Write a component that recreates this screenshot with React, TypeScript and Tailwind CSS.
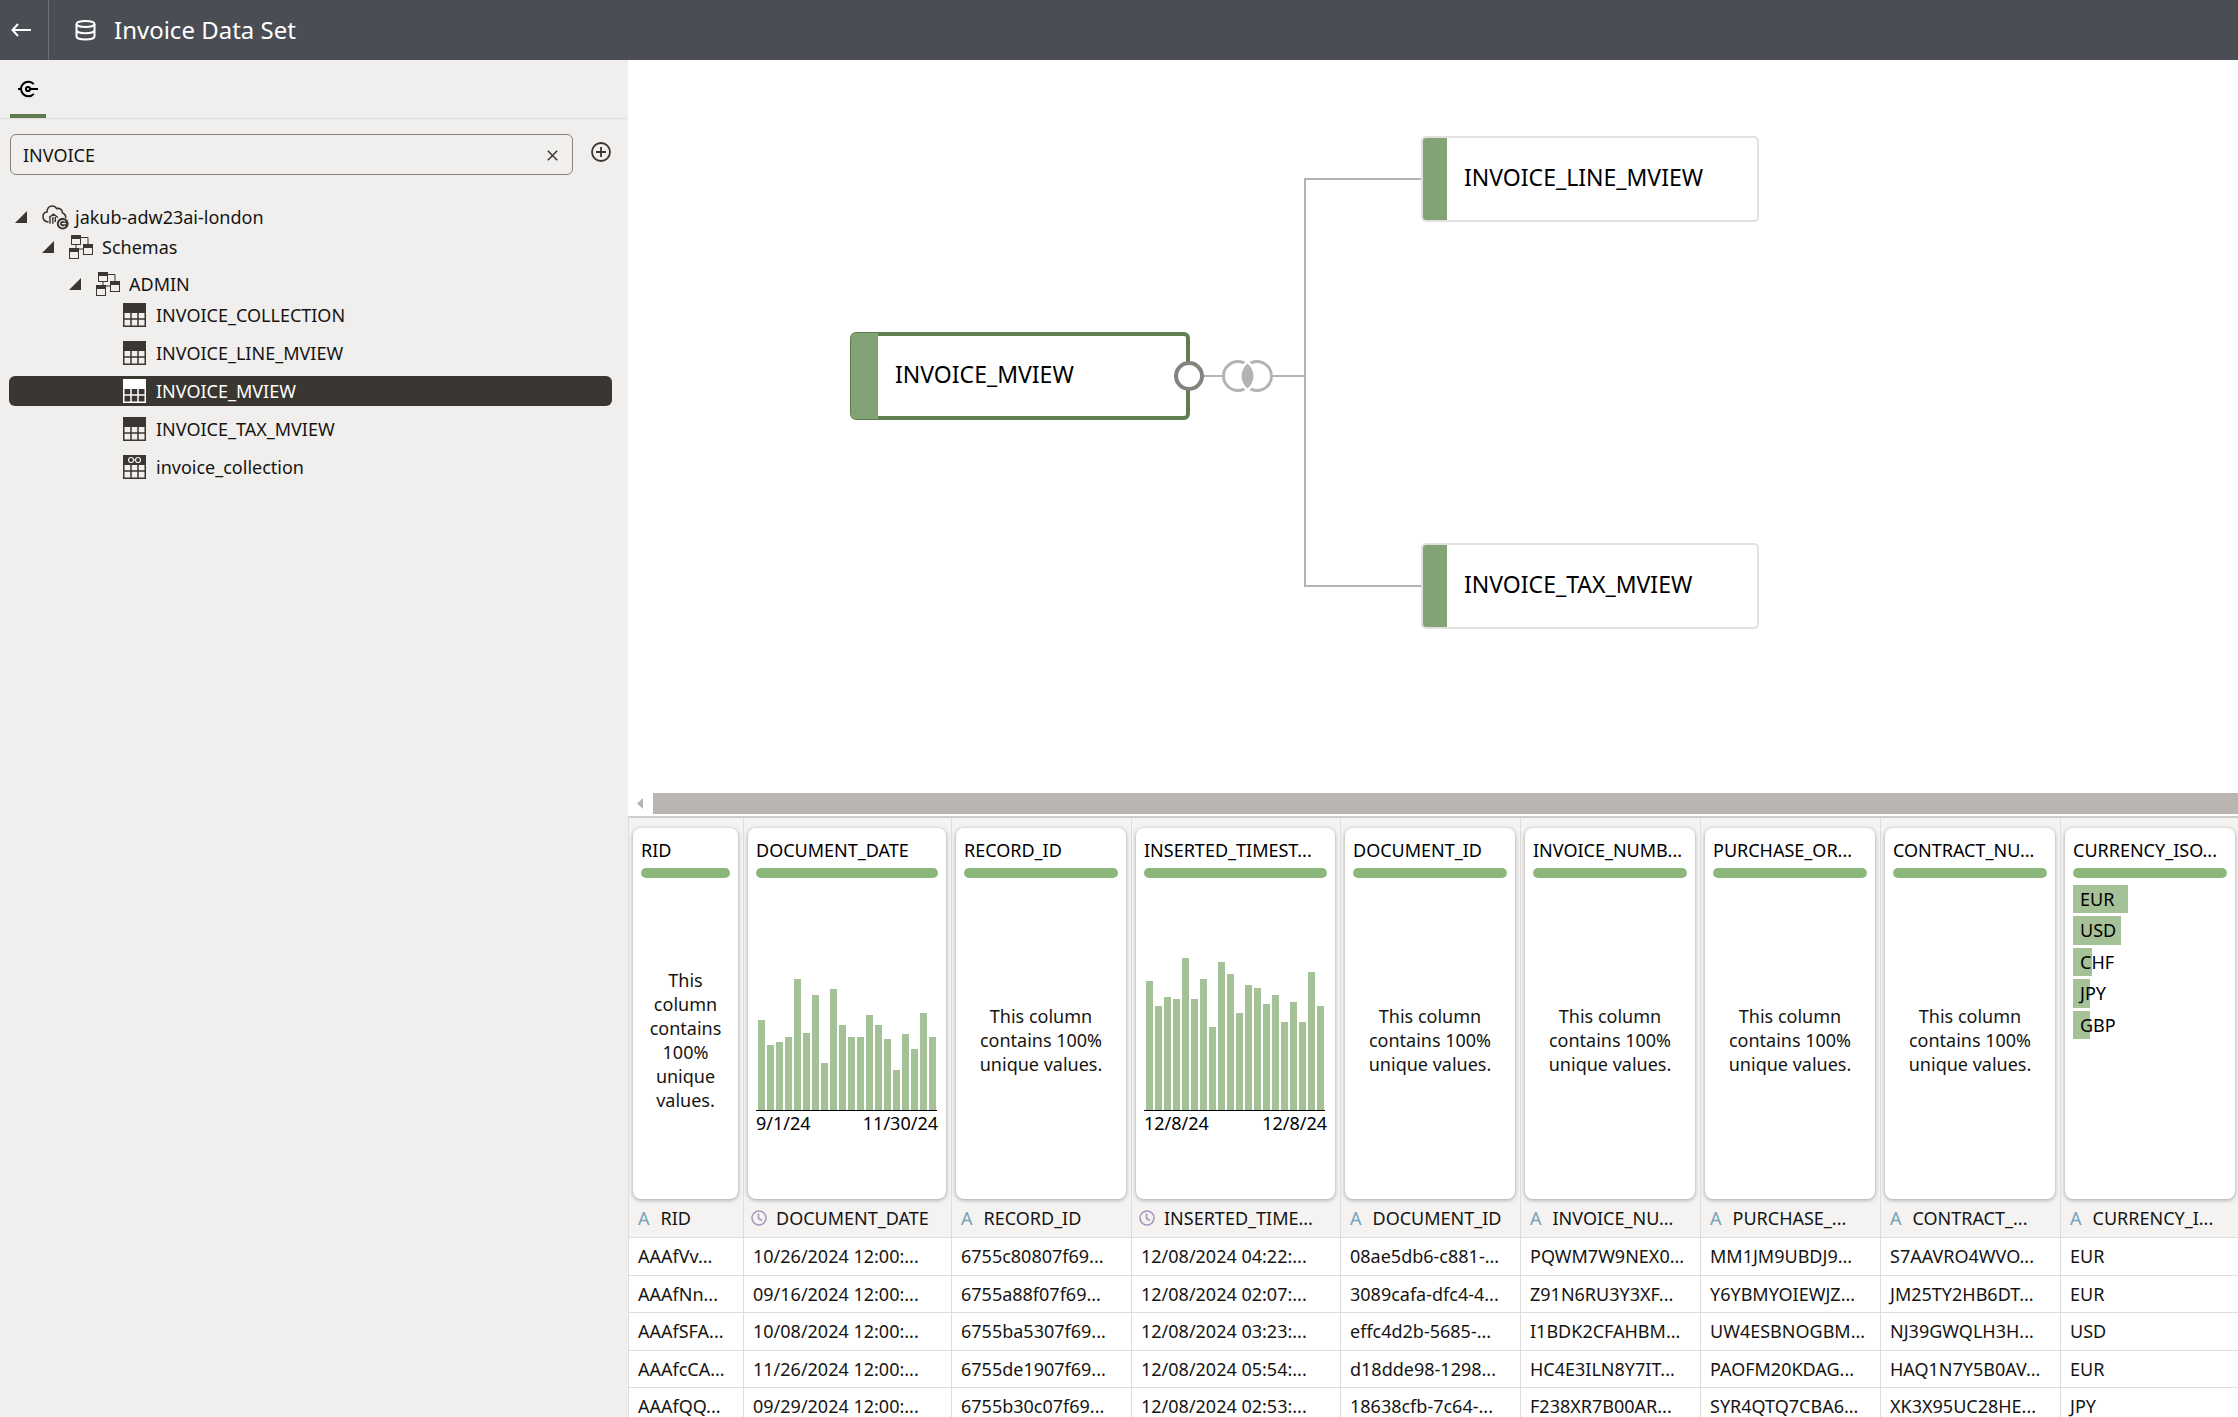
import type { ReactNode } from "react";

type Kind = "text" | "date";
type Column = {
  width: string;
  title: string;
  label: string;
  kind: Kind;
  bars?: number[];
  from?: string;
  to?: string;
  top?: [string, number][];
};

const columns: Column[] = [
  { width: "w-[115px]", title: "RID", label: "RID", kind: "text" },
  {
    width: "w-[208px]",
    title: "DOCUMENT_DATE",
    label: "DOCUMENT_DATE",
    kind: "date",
    bars: [90, 65, 68, 73, 131, 77, 115, 47, 121, 85, 73, 73, 95, 85, 71, 40, 76, 61, 97, 73],
    from: "9/1/24",
    to: "11/30/24",
  },
  { width: "w-[180px]", title: "RECORD_ID", label: "RECORD_ID", kind: "text" },
  {
    width: "w-[209px]",
    title: "INSERTED_TIMEST...",
    label: "INSERTED_TIME...",
    kind: "date",
    bars: [129, 104, 113, 111, 152, 111, 131, 83, 148, 136, 97, 125, 122, 106, 115, 88, 108, 88, 138, 104],
    from: "12/8/24",
    to: "12/8/24",
  },
  { width: "w-[180px]", title: "DOCUMENT_ID", label: "DOCUMENT_ID", kind: "text" },
  { width: "w-[180px]", title: "INVOICE_NUMB...", label: "INVOICE_NU...", kind: "text" },
  { width: "w-[180px]", title: "PURCHASE_OR...", label: "PURCHASE_...", kind: "text" },
  { width: "w-[180px]", title: "CONTRACT_NU...", label: "CONTRACT_...", kind: "text" },
  {
    width: "w-[180px]",
    title: "CURRENCY_ISO...",
    label: "CURRENCY_I...",
    kind: "text",
    top: [
      ["EUR", 55],
      ["USD", 48],
      ["CHF", 19],
      ["JPY", 17],
      ["GBP", 17],
    ],
  },
];

const rows: string[][] = [
  ["AAAfVv...", "10/26/2024 12:00:...", "6755c80807f69...", "12/08/2024 04:22:...", "08ae5db6-c881-...", "PQWM7W9NEX0...", "MM1JM9UBDJ9...", "S7AAVRO4WVO...", "EUR"],
  ["AAAfNn...", "09/16/2024 12:00:...", "6755a88f07f69...", "12/08/2024 02:07:...", "3089cafa-dfc4-4...", "Z91N6RU3Y3XF...", "Y6YBMYOIEWJZ...", "JM25TY2HB6DT...", "EUR"],
  ["AAAfSFA...", "10/08/2024 12:00:...", "6755ba5307f69...", "12/08/2024 03:23:...", "effc4d2b-5685-...", "I1BDK2CFAHBM...", "UW4ESBNOGBM...", "NJ39GWQLH3H...", "USD"],
  ["AAAfcCA...", "11/26/2024 12:00:...", "6755de1907f69...", "12/08/2024 05:54:...", "d18dde98-1298...", "HC4E3ILN8Y7IT...", "PAOFM20KDAG...", "HAQ1N7Y5B0AV...", "EUR"],
  ["AAAfQQ...", "09/29/2024 12:00:...", "6755b30c07f69...", "12/08/2024 02:53:...", "18638cfb-7c64-...", "F238XR7B00AR...", "SYR4QTQ7CBA6...", "XK3X95UC28HE...", "JPY"],
];

function BackIcon() {
  return (
    <svg width="20" height="14" viewBox="0 0 20 14" fill="none" stroke="currentColor" strokeWidth="2">
      <path d="M20 7H2M7 1 1.5 7 7 13" />
    </svg>
  );
}

function DatabaseIcon() {
  return (
    <svg width="21" height="21" viewBox="0 0 21 21" fill="none" stroke="currentColor" strokeWidth="2">
      <ellipse cx="10.5" cy="4" rx="9" ry="3" />
      <path d="M1.5 4v12.5c0 1.7 4 3 9 3s9-1.3 9-3V4M1.5 10.200c0 1.700 4 3 9 3s9-1.300 9-3" />
    </svg>
  );
}

function ConnectionIcon() {
  return (
    <svg width="20" height="18" viewBox="0 0 20 18" fill="none" stroke="currentColor" strokeWidth="2">
      <path d="M15.800 4.200A7.300 7.300 0 1 0 15.800 13.800M0 9h3M12.200 9H20" />
      <circle cx="10" cy="9" r="2.100" />
    </svg>
  );
}

function CloseIcon() {
  return (
    <svg width="11" height="11" viewBox="0 0 11 11" fill="none" stroke="currentColor" strokeWidth="1.500">
      <path d="M.8.8 10.200 10.200M10.200.8.8 10.200" />
    </svg>
  );
}

function AddIcon() {
  return (
    <svg width="20" height="20" viewBox="0 0 20 20" fill="none" stroke="currentColor" strokeWidth="1.800">
      <circle cx="10" cy="10" r="9" />
      <path d="M10 5v10M5 10h10" />
    </svg>
  );
}

function CloudIcon() {
  return (
    <svg width="27" height="25" viewBox="0 0 27 25" fill="none" stroke="currentColor">
      <path
        d="M6.500 17C3 16.500 1 14.500 1 11.700 1 9 2.800 7.200 5 7 4.800 3.500 7 1 10.200 1c2 0 3.600 1 4.500 2.600C18 2.800 20.500 4.800 20.500 8c2.300.9 3.500 2.600 3.200 5"
        strokeWidth="1.600"
      />
      <path d="M7 12.500 11.500 9.200 16 12.500M8 11.800v7M10.800 12v6.800M13.300 12v5" strokeWidth="1.400" />
      <circle cx="20.700" cy="18.700" r="5.900" fill="currentColor" stroke="none" />
      <path d="M23 16.600a3.200 3.200 0 1 0 0 4.200M19.800 18.700H24" stroke="#f0efed" strokeWidth="1.200" />
    </svg>
  );
}

function SchemaIcon() {
  return (
    <svg width="25" height="25" viewBox="0 0 25 25" fill="none" stroke="currentColor">
      <path d="M12 2.500h7V9M7 9v4M10 14h5" />
      <rect x="2.500" y=".5" width="9" height="9" />
      <rect x="14.500" y="9.500" width="9" height="10" />
      <rect x=".5" y="13.500" width="9" height="10" />
      <path d="M2 0h10v4H2zM14 9h10v4H14zM0 13h10v4H0z" fill="currentColor" stroke="none" />
    </svg>
  );
}

function TableIcon({ glasses = false }: { glasses?: boolean }) {
  return (
    <svg width="23" height="24" viewBox="0 0 23 24" fill="none" stroke="currentColor">
      <rect width="23" height="10" fill="currentColor" stroke="none" />
      <path d="M.75 9v14.200h21.500V9M.5 16h22M8 9v14M15 9v14" strokeWidth="1.500" />
      {glasses && (
        <g stroke="#f0efed" strokeWidth="1.200">
          <circle cx="8" cy="5" r="2.500" />
          <circle cx="15" cy="5" r="2.500" />
          <path d="M10.500 5h2" />
        </g>
      )}
    </svg>
  );
}

function ClockIcon() {
  return (
    <svg width="16" height="16" viewBox="0 0 16 16" fill="none" stroke="#ab97bd" strokeWidth="1.600" className="shrink-0">
      <circle cx="8" cy="8" r="7" />
      <path d="M7.500 3.500v5l3.500 2" />
    </svg>
  );
}

function Row({
  children,
  icon,
  branch = false,
  selected = false,
  indent,
}: {
  children: ReactNode;
  icon: ReactNode;
  branch?: boolean;
  selected?: boolean;
  indent: string;
}) {
  return (
    <button
      type="button"
      className={`flex h-[30px] w-full items-center rounded-md text-left ${indent} ${
        selected ? "bg-[#3a3631] text-white" : "text-[#161513]"
      }`}
    >
      {branch && (
        <svg width="12" height="12" viewBox="0 0 12 12" className="mr-[15px] text-[#3a3631]">
          <path d="M12 0v12H0z" fill="currentColor" />
        </svg>
      )}
      <span className={`mr-[7px] w-[26px] ${selected ? "text-white" : "text-[#3a3631]"}`}>{icon}</span>
      {children}
    </button>
  );
}

function Sidebar() {
  return (
    <aside className="flex w-[628px] shrink-0 flex-col bg-[#f0efed]">
      <div className="h-[59px] border-b border-[#dfdedc] pl-[10px]">
        <button type="button" aria-label="Connections" className="flex h-[58px] w-9 items-center justify-center border-b-4 border-[#5f7d4f] pt-1">
          <ConnectionIcon />
        </button>
      </div>
      <div className="flex items-start pt-[15px] pl-[10px]">
        <div className="flex h-[41px] w-[563px] items-center rounded-md border border-[#85827e] pt-0.5 pr-[14px] pl-3">
          <input
            aria-label="Search"
            defaultValue="INVOICE"
            className="min-w-0 flex-1 bg-transparent text-[#161513] outline-none"
          />
          <button type="button" aria-label="Clear" className="text-[#3a3631]">
            <CloseIcon />
          </button>
        </div>
        <button type="button" aria-label="Add" className="mt-2 ml-[18px] text-[#3a3631]">
          <AddIcon />
        </button>
      </div>
      <nav className="mt-[27px] mr-4 ml-[9px]">
        <ul>
          <li>
            <Row branch icon={<CloudIcon />} indent="pl-[6px]">
              jakub-adw23ai-london
            </Row>
            <ul>
              <li>
                <Row branch icon={<SchemaIcon />} indent="pl-[33px]">
                  Schemas
                </Row>
                <ul className="mt-[7px]">
                  <li>
                    <Row branch icon={<SchemaIcon />} indent="pl-[60px]">
                      ADMIN
                    </Row>
                    <ul className="mt-px flex flex-col gap-2">
                      <li>
                        <Row icon={<TableIcon />} indent="pl-[114px]">
                          INVOICE_COLLECTION
                        </Row>
                      </li>
                      <li>
                        <Row icon={<TableIcon />} indent="pl-[114px]">
                          INVOICE_LINE_MVIEW
                        </Row>
                      </li>
                      <li>
                        <Row selected icon={<TableIcon />} indent="pl-[114px]">
                          INVOICE_MVIEW
                        </Row>
                      </li>
                      <li>
                        <Row icon={<TableIcon />} indent="pl-[114px]">
                          INVOICE_TAX_MVIEW
                        </Row>
                      </li>
                      <li>
                        <Row icon={<TableIcon glasses />} indent="pl-[114px]">
                          invoice_collection
                        </Row>
                      </li>
                    </ul>
                  </li>
                </ul>
              </li>
            </ul>
          </li>
        </ul>
      </nav>
    </aside>
  );
}

function Node({ place, children }: { place: string; children: ReactNode }) {
  return (
    <div className={`absolute flex h-[86px] w-[338px] items-center overflow-hidden rounded-[5px] border-2 border-[#e3e1df] bg-white ${place}`}>
      <div className="-my-0.5 -ml-0.5 h-[86px] w-[26px] bg-[#82a373]" />
      <span className="pb-1 pl-[17px] text-[23px] text-black">{children}</span>
    </div>
  );
}

function Diagram() {
  return (
    <div className="relative min-h-0 flex-1 overflow-hidden bg-white">
      <svg width="800" height="600" viewBox="0 0 800 600" fill="none" stroke="#b3b3b3" strokeWidth="2" className="absolute top-0 left-0">
        <path d="M574 316h21M645 316h32M793 119H677V526H793" />
        <g strokeWidth="3">
          <circle cx="610" cy="316" r="14.500" />
          <circle cx="629" cy="316" r="14.500" />
        </g>
        <path
          d="M619.500 303.500c8 7 8 18 0 25c-8-7-8-18 0-25z"
          fill="#b3b3b3"
          stroke="#fff"
          strokeWidth="5"
        />
        <path d="M619.500 303.500c8 7 8 18 0 25c-8-7-8-18 0-25z" fill="#b3b3b3" stroke="none" />
      </svg>
      <div className="absolute top-[272px] left-[222px] flex h-[88px] w-[340px] items-center rounded-md border-4 border-[#5f7d4f] bg-white">
        <div className="-my-[3px] -ml-[3px] h-[86px] w-[27px] rounded-l bg-[#82a373]" />
        <span className="pb-1 pl-[17px] text-[23px] text-black">INVOICE_MVIEW</span>
      </div>
      <div className="absolute top-[301px] left-[546px] size-[30px] rounded-full border-4 border-[#85827e] bg-white" />
      <Node place="top-[76px] left-[793px]">INVOICE_LINE_MVIEW</Node>
      <Node place="top-[483px] left-[793px]">INVOICE_TAX_MVIEW</Node>
    </div>
  );
}

function Histogram({ bars, from, to }: { bars: number[]; from?: string; to?: string }) {
  return (
    <div>
      <div className="flex h-[233px] w-[181px] items-end gap-0.5 border-b border-black px-0.5">
        {bars.map((height, i) => (
          <div key={i} className="w-[7px] shrink-0 bg-[#a5c198]" style={{ height }} />
        ))}
      </div>
      <div className="flex justify-between leading-6">
        <span>{from}</span>
        <span>{to}</span>
      </div>
    </div>
  );
}

function TopValues({ values }: { values: [string, number][] }) {
  return (
    <ul className="mt-[7px] flex flex-col gap-[3px]">
      {values.map(([name, width]) => (
        <li key={name} className="relative flex items-center pl-[7px] odd:h-[28px] even:h-[29px]">
          <div className="absolute inset-y-0 left-0 bg-[#a5c198]" style={{ width }} />
          <span className="relative">{name}</span>
        </li>
      ))}
    </ul>
  );
}

function Card({ column }: { column: Column }) {
  return (
    <div className="mr-[5px] ml-1 flex h-[371px] flex-col rounded-lg bg-white px-2 pt-[10px] text-left text-black shadow-[0_1px_4px_rgba(0,0,0,0.350)]">
      <div className="overflow-hidden leading-6 whitespace-nowrap">{column.title}</div>
      <div className="mt-[6px] h-[10px] shrink-0 rounded-full bg-[#8cb77b]" />
      {column.bars && <Histogram bars={column.bars} from={column.from} to={column.to} />}
      {column.top && <TopValues values={column.top} />}
      {!column.bars && !column.top && (
        <p className="flex flex-1 items-center justify-center px-1 pt-0.5 text-center leading-6 text-[#161513]">
          This column contains 100% unique values.
        </p>
      )}
    </div>
  );
}

function DataGrid() {
  return (
    <div className="h-[601px] shrink-0 overflow-hidden border-t-2 border-l border-t-[#cfcdcb] border-l-[#dfdddb] bg-white">
      <table className="w-[1612px] table-fixed border-separate border-spacing-0 text-[18px] text-[#161513]">
        <colgroup>
          {columns.map((c) => (
            <col key={c.title} className={c.width} />
          ))}
        </colgroup>
        <thead className="bg-[#f4f3f2]">
          <tr>
            {columns.map((c) => (
              <td key={c.title} className="h-[381px] border-r border-[#dfdddb] p-0 align-bottom">
                <Card column={c} />
              </td>
            ))}
          </tr>
          <tr>
            {columns.map((c) => (
              <th key={c.title} scope="col" className="h-[39px] border-r border-b border-[#dfdddb] p-0 font-normal">
                <div className={`flex items-center overflow-hidden whitespace-nowrap ${c.kind === "date" ? "gap-[9px] pl-[7px]" : "gap-[11px] pl-[9px]"}`}>
                  {c.kind === "date" ? <ClockIcon /> : <span className="text-[#76a3b8]">A</span>}
                  <span>{c.label}</span>
                </div>
              </th>
            ))}
          </tr>
        </thead>
        <tbody>
          {rows.map((row) => (
            <tr key={row[0]} className="odd:h-[38px] even:h-[37px]">
              {row.map((value, i) => (
                <td key={i} className="overflow-hidden border-r border-b border-[#dfdddb] p-0 pl-[9px] whitespace-nowrap">
                  {value}
                </td>
              ))}
            </tr>
          ))}
        </tbody>
      </table>
    </div>
  );
}

export default function App() {
  return (
    <div className="flex h-screen flex-col overflow-hidden bg-white font-['Noto_Sans',sans-serif] text-[18px]">
      <header className="flex h-[60px] shrink-0 items-center bg-[#4a4d54] text-white">
        <button type="button" aria-label="Back" className="flex h-full w-[49px] items-center border-r border-[#6e7076] pl-[11px]">
          <BackIcon />
        </button>
        <span className="ml-[26px]">
          <DatabaseIcon />
        </span>
        <h1 className="ml-[18px] text-2xl">Invoice Data Set</h1>
      </header>
      <div className="flex min-h-0 flex-1">
        <Sidebar />
        <main className="flex min-w-0 flex-1 flex-col">
          <Diagram />
          <div className="flex h-[23px] shrink-0 items-start">
            <button type="button" aria-label="Scroll left" className="flex h-[21px] w-[25px] items-center pl-[9px]">
              <svg width="6" height="11" viewBox="0 0 6 11">
                <path d="M6 0v11L0 5.500z" fill="#b9b4b0" />
              </svg>
            </button>
            <div className="h-[21px] flex-1 bg-[#bab5b1]" />
          </div>
          <DataGrid />
        </main>
      </div>
    </div>
  );
}
